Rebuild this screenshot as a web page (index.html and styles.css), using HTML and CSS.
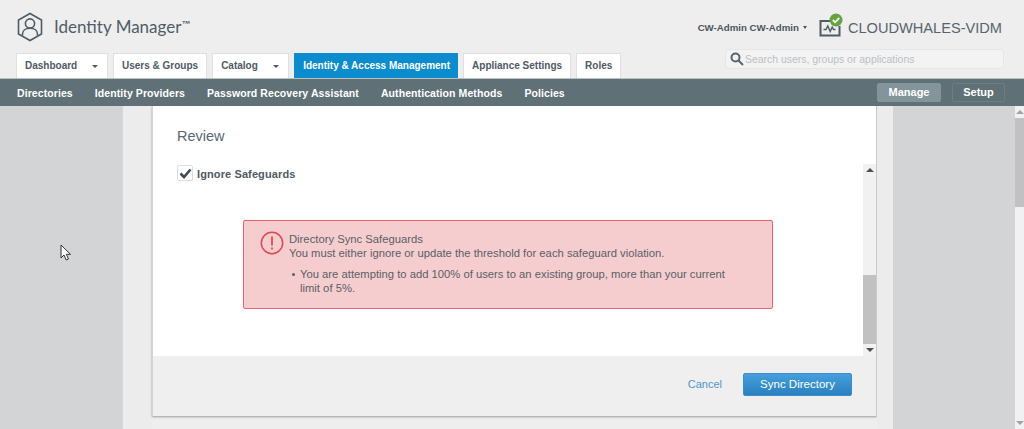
FILE: index.html
```html
<!DOCTYPE html>
<html lang="en">
<head>
<meta charset="utf-8">
<title>Identity Manager</title>
<link rel="stylesheet" href="styles.css">
</head>
<body>
<header class="top">
  <div class="top-row">
    <div class="brand">
      <svg class="logo" width="28" height="30" viewBox="0 0 28 30" fill="none" stroke="#4d5d68" stroke-width="1.6">
        <path d="M14 1.500 25.500 8v14L14 28.500 2.500 22V8z"/>
        <circle cx="14" cy="11.500" r="4.600"/>
        <path d="M6.500 23.500v-1.500c0-3.500 3-5.800 7.500-5.800s7.500 2.300 7.500 5.800v1.500"/>
      </svg>
      <span class="brand-name">Identity Manager</span><span class="tm">™</span>
    </div>
    <div class="account">
      <span class="user">CW-Admin CW-Admin</span>
      <span class="caret-small"></span>
      <span class="tenant-icon">
        <svg width="29" height="24" viewBox="0 0 29 24" fill="none">
          <path d="M11 8H1.500V22.500H20.500V13" stroke="#4d5d68" stroke-width="2"/>
          <path d="M4.500 16.500h2.500l1.800-3.500 2.400 5.500 2-4.500 1.300 2.500h2" stroke="#4d5d68" stroke-width="1.400"/>
          <circle cx="17" cy="7" r="6.500" fill="#62a53e"/>
          <path d="M13.800 7l2.300 2.300 4.200-4.400" stroke="#fff" stroke-width="1.800"/>
        </svg>
      </span>
      <span class="tenant">CLOUDWHALES-VIDM</span>
    </div>
  </div>
  <div class="tab-row">
    <nav class="tabs">
      <a class="tab tab-drop tab-dash">Dashboard<i class="caret"></i></a>
      <a class="tab">Users &amp; Groups</a>
      <a class="tab tab-drop tab-cat">Catalog<i class="caret"></i></a>
      <a class="tab tab-active">Identity &amp; Access Management</a>
      <a class="tab">Appliance Settings</a>
      <a class="tab">Roles</a>
    </nav>
    <div class="search">
      <svg width="14" height="14" viewBox="0 0 14 14" fill="none" stroke="#56646e" stroke-width="2">
        <circle cx="5.500" cy="5.500" r="4"/>
        <path d="M8.500 8.500 13 13"/>
      </svg>
      <span>Search users, groups or applications</span>
    </div>
  </div>
</header>
<nav class="subnav">
  <div class="sub-links">
    <a>Directories</a>
    <a>Identity Providers</a>
    <a>Password Recovery Assistant</a>
    <a>Authentication Methods</a>
    <a>Policies</a>
  </div>
  <div class="sub-btns">
    <a class="sub-btn sub-btn-on">Manage</a>
    <a class="sub-btn">Setup</a>
  </div>
</nav>
<main class="stage">
  <div class="backdrop"></div>
  <div class="strip strip-l"></div>
  <section class="modal">
    <div class="modal-body">
      <h2 class="modal-title">Review</h2>
      <div class="scroll-area">
        <div class="scroll-content">
          <label class="check-row">
            <span class="checkbox">
              <svg width="13" height="11" viewBox="0 0 13 11" fill="none" stroke="#3f4a55" stroke-width="2.600"><path d="M1.500 5.500 5 9 11.500 1.500"/></svg>
            </span>
            <span class="check-label">Ignore Safeguards</span>
          </label>
          <div class="alert">
            <svg class="alert-icon" width="24" height="24" viewBox="0 0 24 24" fill="none">
              <circle cx="12" cy="12" r="10.700" stroke="#e0464e" stroke-width="1.500"/>
              <path d="M12 5.500v9M12 16.500v2" stroke="#e0464e" stroke-width="1.700"/>
            </svg>
            <div class="alert-text">
              <p>Directory Sync Safeguards</p>
              <p>You must either ignore or update the threshold for each safeguard violation.</p>
              <ul>
                <li>You are attempting to add 100% of users to an existing group, more than your current limit of 5%.</li>
              </ul>
            </div>
          </div>
        </div>
        <div class="scrollbar">
          <i class="arrow-up"></i>
          <div class="track"><div class="thumb"></div></div>
          <i class="arrow-down"></i>
        </div>
      </div>
    </div>
    <footer class="modal-foot">
      <a class="cancel">Cancel</a>
      <a class="primary">Sync Directory</a>
    </footer>
  </section>
  <div class="strip strip-r"></div>
  <div class="backdrop"></div>
  <div class="page-scroll">
    <i class="arrow-up"></i>
    <div class="page-thumb"></div>
    <div class="page-track"></div>
    <i class="arrow-down"></i>
  </div>
  <svg class="cursor" width="12" height="18" viewBox="0 0 12 18">
    <path d="M1 1v13l3-3 2.200 5 2.300-1-2.200-4.700H10.500z" fill="#fff" stroke="#333" stroke-width="1"/>
  </svg>
</main>
</body>
</html>
```
FILE: styles.css
```css
* { box-sizing: border-box; }
html, body { margin: 0; height: 429px; overflow: hidden; }
body {
  width: 1024px;
  background: #eeeeee;
  font-family: "Liberation Sans", Arial, sans-serif;
  color: #4d5b66;
}
.top {
  height: 78px;
  background: #eeeeee;
  display: flex;
  flex-direction: column;
}
.top-row {
  height: 53px;
  display: flex;
  justify-content: space-between;
  padding: 11px 22px 0 16px;
}
.brand { display: flex; align-items: flex-start; }
.logo { margin-top: 1px; }
.brand-name {
  font-family: Lato, sans-serif;
  font-size: 17px;
  line-height: 20px;
  margin: 6px 0 0 10px;
  color: #4e5d68;
}
.tm { font-size: 9px; font-weight: 700; margin-top: 8px; color: #4e5d68; }
.account { display: flex; align-items: flex-start; }
.user {
  font-size: 9.700px;
  font-weight: 700;
  line-height: 14px;
  margin-top: 10px;
  color: #4a5560;
}
.caret-small {
  width: 0; height: 0;
  margin: 15px 0 0 4px;
  border: 2px solid transparent;
  border-top: 3px solid #4a5560;
  border-bottom: 0;
}
.tenant-icon { margin: 2px 0 0 12px; height: 24px; }
.tenant {
  font-size: 14.600px;
  line-height: 18px;
  margin-top: 8px;
  color: #57646d;
}
.tab-row {
  flex: 1;
  display: flex;
  justify-content: space-between;
  align-items: flex-start;
  padding: 0 20px 0 16px;
}
.tabs { display: flex; gap: 5px; height: 25px; }
.tab {
  height: 25px;
  padding: 0 8px;
  background: #fff;
  border: 1px solid #dfdfdf;
  border-bottom: 0;
  font-size: 10px;
  font-weight: 700;
  line-height: 23px;
  color: #4f5a64;
  white-space: nowrap;
  display: flex;
  justify-content: space-between;
}
.tab-dash { width: 92px; }
.tab-cat { width: 77px; }
.tab-active {
  padding: 0 7px 0 8px;
  background: #0a8ccf;
  border-color: #0a8ccf;
  color: #fff;
}
.caret {
  width: 0; height: 0;
  margin: 11px 1px 0 0;
  border: 3px solid transparent;
  border-top: 3px solid #4f5a64;
  border-bottom: 0;
}
.search {
  width: 279px;
  height: 20px;
  margin-top: -4px;
  background: #f3f3f3;
  border: 1px solid #e6e6e6;
  border-radius: 3px;
  display: flex;
  align-items: center;
  gap: 1px;
  padding-left: 4px;
  font-size: 10.450px;
  color: #bcc0c4;
}
.subnav {
  height: 28px;
  background: #5f7077;
  border-top: 1px solid #b9bfc2;
  display: flex;
  justify-content: space-between;
  align-items: center;
  padding: 0 19px 0 17px;
}
.sub-links { display: flex; gap: 22px; }
.sub-links a {
  color: #fff;
  font-size: 10.500px;
  font-weight: 700;
  white-space: nowrap;
  letter-spacing: 0.085px;
}
.sub-btns { display: flex; gap: 11px; }
.sub-btn {
  width: 53px;
  height: 19px;
  border: 1px solid #6d7d84;
  border-radius: 2px;
  color: #fff;
  font-size: 11px;
  font-weight: 700;
  line-height: 17px;
  text-align: center;
}
.sub-btn-on {
  width: 64px;
  background: #84949b;
  border-color: #84949b;
}
.stage {
  position: relative;
  height: 323px;
  display: grid;
  grid-template-columns: 122px 30px 725px 16px 122px 9px;
  background: #eeeeee;
}
.backdrop { background: #d3d4d6; }
.strip { background: #ececec; border-left: 1px solid #d7d7d7; }
.strip-r { border-left: 0; }
.modal {
  height: 310px;
  background: #efefef;
  border-right: 1px solid #c9c9c9;
  border-left: 1px solid #d4d4d4;
  box-shadow: 0 1px 2px rgba(0, 0, 0, 0.35);
  display: flex;
  flex-direction: column;
}
.modal-body {
  height: 250px;
  background: #fff;
  display: flex;
  flex-direction: column;
}
.modal-title {
  margin: 0;
  height: 58px;
  padding: 21px 0 0 24px;
  font-size: 14.500px;
  line-height: 18px;
  font-weight: 400;
  color: #5a6670;
}
.scroll-area {
  height: 192px;
  display: flex;
}
.scroll-content { flex: 1; padding: 1px 0 0 24px; }
.check-row { display: flex; align-items: center; height: 16px; }
.checkbox {
  width: 16px;
  height: 16px;
  background: #fff;
  border: 1px solid #dcdcdc;
  border-radius: 2px;
  display: flex;
  align-items: center;
  justify-content: center;
}
.check-label {
  margin-left: 4px;
  padding-top: 2px;
  font-size: 11px;
  font-weight: 700;
  color: #4f5a64;
  letter-spacing: 0.010em;
}
.alert {
  width: 530px;
  height: 89px;
  margin: 39px 0 0 66px;
  background: #f5cdcf;
  border: 1px solid #e8636a;
  border-radius: 2px;
  display: flex;
  padding: 10px 0 0 16px;
}
.alert-icon { flex: none; }
.alert-text {
  margin-left: 5px;
  padding-top: 1px;
  width: 445px;
  font-size: 11.250px;
  line-height: 14px;
  color: #5a5f66;
}
.alert-text p { margin: 0; }
.alert-text ul { margin: 7px 0 0; padding: 0 0 0 11px; list-style: none; }
.alert-text li { position: relative; }
.alert-text li::before {
  content: "";
  position: absolute;
  left: -8px;
  top: 6px;
  width: 3px;
  height: 3px;
  border-radius: 50%;
  background: #5a5f66;
}
.scrollbar {
  width: 13px;
  background: #f1f1f1;
  display: flex;
  flex-direction: column;
  align-items: center;
}
.track { flex: 1; width: 100%; display: flex; flex-direction: column; justify-content: flex-end; }
.thumb { height: 69px; background: #c1c1c1; }
.arrow-up, .arrow-down {
  flex: none;
  width: 0; height: 0;
  border: 4px solid transparent;
  margin: 4px 0;
}
.arrow-up { border-bottom: 4px solid #505050; border-top: 0; }
.arrow-down { border-top: 4px solid #505050; border-bottom: 0; }
.modal-foot {
  flex: 1;
  display: flex;
  justify-content: flex-end;
  align-items: center;
  padding: 0 24px 4px 0;
  gap: 21px;
}
.cancel { color: #4e95cf; font-size: 11px; }
.primary {
  width: 109px;
  height: 23px;
  background: linear-gradient(#459fdc, #2a80c0);
  border: 1px solid #3a8fcb;
  border-radius: 2px;
  color: #fff;
  font-size: 11.500px;
  line-height: 21px;
  text-align: center;
}
.page-scroll {
  background: #f1f1f1;
  display: flex;
  flex-direction: column;
  align-items: center;
}
.page-scroll .arrow-up { border-bottom-color: #a3a3a3; }
.page-scroll .arrow-down { border-top-color: #a3a3a3; }
.page-thumb { width: 100%; height: 89px; background: #c1c1c1; }
.page-track { flex: 1; }
.cursor { position: absolute; left: 60px; top: 138px; }
```
